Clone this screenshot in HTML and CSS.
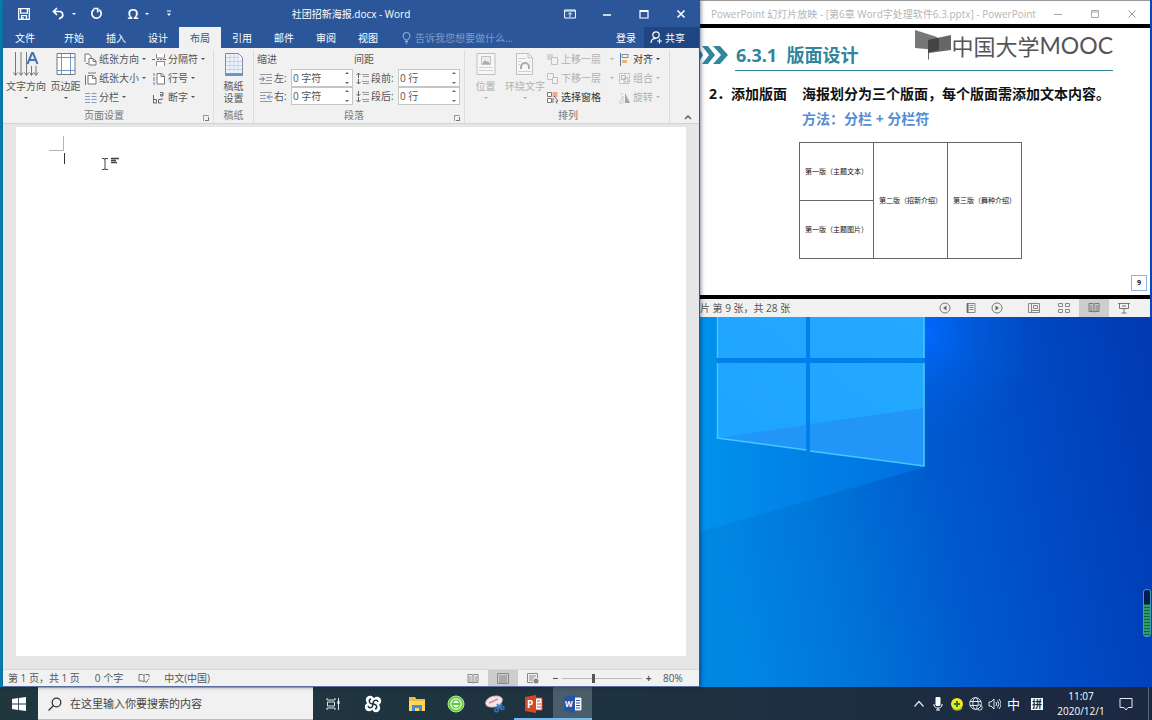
FILE: index.html
```html
<!DOCTYPE html>
<html lang="zh-CN">
<head>
<meta charset="utf-8">
<title>社团招新海报.docx - Word</title>
<link rel="stylesheet" href="styles.css">
</head>
<body>
<main class="desktop">
  <section class="word" aria-label="Word">
    <header class="word-title">
      <div class="qat">
        <button class="q-save" aria-label="保存"><svg width="12" height="12" viewBox="0 0 12 12"><path d="M.7.7h10.6v10.6H.7zM2.700 1v4.200h6.600V1M3.500 11V7.700h5V11M5 9v2" fill="none" stroke="#fff" stroke-width="1.300"/></svg></button>
        <button class="q-undo" aria-label="撤消"><svg width="13" height="13" viewBox="0 0 13 13"><path d="M1.500 4.500h6.300a3.300 3.300 0 0 1 1 6.300L7 12M5 1 1.500 4.500 5 8" fill="none" stroke="#fff" stroke-width="1.700"/></svg></button>
        <button class="q-drop" aria-label="撤消选项"><i class="caret"></i></button>
        <button class="q-redo" aria-label="重复"><svg width="13" height="13" viewBox="0 0 13 13"><path d="M4 2.500a4.700 4.700 0 1 0 5.300.200M3.500 1.500h4.200v4" fill="none" stroke="#fff" stroke-width="1.700"/></svg></button>
        <button class="q-omega" aria-label="符号">Ω</button>
        <button class="q-drop" aria-label="符号选项"><i class="caret"></i></button>
        <button class="q-more" aria-label="自定义"><svg width="6" height="7" viewBox="0 0 6 7"><path d="M1 1h4" stroke="#fff"/><path d="M1 3.500h4L3 6z" fill="#fff"/></svg></button>
      </div>
      <h1>社团招新海报.docx - Word</h1>
      <div class="win-buttons">
        <button aria-label="功能区显示选项"><svg width="12" height="10" viewBox="0 0 12 10"><path d="M.6 1h10.800v8H.6zM.6 2h10.800M6 8V4M4 5.500l2-2 2 2" fill="none" stroke="#fff"/></svg></button>
        <button aria-label="最小化"><svg width="10" height="10" viewBox="0 0 10 10"><path d="M1 6h8" stroke="#fff" stroke-width="1.500"/></svg></button>
        <button aria-label="最大化"><svg width="10" height="10" viewBox="0 0 10 10"><path d="M1 1.500h8V9H1zM1 2.500h8" fill="none" stroke="#fff" stroke-width="1.200"/></svg></button>
        <button aria-label="关闭"><svg width="10" height="10" viewBox="0 0 10 10"><path d="m1.500 1.500 7 7m0-7-7 7" stroke="#fff" stroke-width="1.600"/></svg></button>
      </div>
    </header>
    <nav class="tabs">
      <button class="tab file">文件</button>
      <button class="tab">开始</button>
      <button class="tab">插入</button>
      <button class="tab">设计</button>
      <button class="tab active">布局</button>
      <button class="tab">引用</button>
      <button class="tab">邮件</button>
      <button class="tab">审阅</button>
      <button class="tab">视图</button>
      <label class="tellme"><svg width="9" height="12" viewBox="0 0 9 12"><path d="M3 8C3 6.500 1 6 1 3.900a3.500 3.500 0 0 1 7 0C8 6 6 6.500 6 8zM3 9.500h3M3.500 11h2" fill="none" stroke="#a5b9da"/></svg><input type="text" placeholder="告诉我您想要做什么..." aria-label="告诉我您想要做什么"></label>
      <button class="login">登录</button>
      <button class="share"><svg width="12" height="13" viewBox="0 0 12 13"><circle cx="6" cy="4" r="3.200" fill="none" stroke="#fff" stroke-width="1.200"/><path d="M1 12c0-3 2-4.700 5-4.700M7 10h5M9.500 7.500v5" fill="none" stroke="#fff" stroke-width="1.200"/></svg>共享</button>
    </nav>
    <div class="ribbon">
      <section class="group g-page">
        <div class="tools">
          <button class="big w42"><svg width="26" height="27" viewBox="0 0 26 27"><path d="M2.500 1v23M8 1v23M13.500 1v23M18.500 15v9M23 15v9" stroke="#777"/><path d="m.5 21.500 2 3 2-3M6 21.500l2 3 2-3M11.500 21.500l2 3 2-3M16.500 21.500l2 3 2-3M21 21.500l2 3 2-3" fill="none" stroke="#777"/><path d="m14.500 13 4.500-11h1l4.500 11M16 9h7" fill="none" stroke="#4472b8" stroke-width="2"/></svg><span>文字方向</span><i class="caret"></i></button>
          <button class="big w36"><svg width="20" height="27" viewBox="0 0 20 27"><path d="M1 2.500h18v21H1z" fill="#fff" stroke="#777"/><path d="M5.500 3v20M14.500 3v20M1 6.500h18M1 19.500h18" stroke="#6d95cd"/></svg><span>页边距</span><i class="caret"></i></button>
          <div class="stack c68">
            <button class="small"><svg width="13" height="13" viewBox="0 0 13 13"><path d="M1 9V1h4l2 2v2M5 5.500h4.500L12 8v4H5zM9 6v2.500h3" fill="#fff" stroke="#777"/><path d="M2 10.500h2" stroke="#4f7dbe"/></svg>纸张方向<i class="caret"></i></button>
            <button class="small"><svg width="13" height="13" viewBox="0 0 13 13"><path d="M4 3.500h5L12 6v6H4zM8.500 4v2.500H12" fill="#fff" stroke="#777"/><path d="M1.500 3v10M4 1h8" stroke="#777"/></svg>纸张大小<i class="caret"></i></button>
            <button class="small"><svg width="13" height="13" viewBox="0 0 13 13"><path d="M1 2.500h5M1 5.500h5M1 8.500h5M1 11.500h5M7.500 2.500h5M7.500 5.500h5M7.500 8.500h5M7.500 11.500h5" stroke="#7f9cc4"/></svg>分栏<i class="caret"></i></button>
          </div>
          <div class="stack">
            <button class="small"><svg width="14" height="13" viewBox="0 0 14 13"><path d="M4.500 1v4h8V1M4.500 13V8.500h8V13" fill="#fff" stroke="#888"/><path d="M0 6.500h3M5 6.500h2M8 6.500h2M11 6.500h3" stroke="#666"/></svg>分隔符<i class="caret"></i></button>
            <button class="small"><svg width="14" height="13" viewBox="0 0 14 13"><path d="M5 1.500h4.500L12.500 4v8H5zM9 2v2.500h3" fill="#fff" stroke="#777"/><path d="M2 1v3M1 6h2M1 8h2M2 10v3" stroke="#4f7dbe"/></svg>行号<i class="caret"></i></button>
            <button class="small"><svg width="14" height="13" viewBox="0 0 14 13"><path d="M1.500 4v8h3V8.500h-3M9.500 8.500H6.500V12h3M8 1.500h3V5H8.500V3.500H11M10 7v2" fill="none" stroke="#666"/></svg>断字<i class="caret"></i></button>
          </div>
        </div>
        <footer><span>页面设置</span><button class="launch" aria-label="页面设置对话框"></button></footer>
      </section>
      <section class="group g-grid">
        <div class="tools">
          <button class="big w40"><svg width="20" height="27" viewBox="0 0 20 27"><path d="M1.500 2.500h13l4 4v18h-17z" fill="#eef3fa" stroke="#7c8da8"/><path d="M2 6.500h13M2 10.500h16M2 14.500h16M2 18.500h16M6 3v17M10 3v17M14 3v17" stroke="#c3d3eb"/><path d="M2 22h16v2H2z" fill="#7296cb"/></svg><span>稿纸</span><span>设置</span></button>
        </div>
        <footer><span>稿纸</span></footer>
      </section>
      <section class="group g-para">
        <div class="tools para">
          <div class="fields">
            <h2>缩进</h2>
            <div class="field"><svg width="14" height="13" viewBox="0 0 14 13"><path d="M1 2.500h12M7 5.500h6M7 8.500h6M1 11.500h12" stroke="#999"/><path d="M0 7h5M3 4.500 5.500 7 3 9.500" fill="none" stroke="#4f6f9e"/></svg><label for="left">左:</label><span class="spin"><input id="left" type="text" value="0 字符"><i class="updown"></i></span></div>
            <div class="field"><svg width="14" height="13" viewBox="0 0 14 13"><path d="M1 2.500h12M1 5.500h6M1 8.500h6M1 11.500h12" stroke="#999"/><path d="M8 7h6M11 4.500 8.500 7 11 9.500" fill="none" stroke="#4f7dbe"/></svg><label for="right">右:</label><span class="spin"><input id="right" type="text" value="0 字符"><i class="updown"></i></span></div>
          </div>
          <div class="fields wide">
            <h2>间距</h2>
            <div class="field"><svg width="14" height="13" viewBox="0 0 14 13"><path d="M6 2.500h7M7 4.500h6M6 9.500h7M7 11.500h6" stroke="#999"/><path d="M2.500 6V1M.5 3l2-2 2 2M2.500 7v5M.5 10l2 2 2-2" fill="none" stroke="#666"/></svg><label for="before">段前:</label><span class="spin"><input id="before" type="text" value="0 行"><i class="updown"></i></span></div>
            <div class="field"><svg width="14" height="13" viewBox="0 0 14 13"><path d="M6 2.500h7M7 4.500h6M6 9.500h7M7 11.500h6" stroke="#999"/><path d="M2.500 1v5M.5 4l2 2 2-2M2.500 7v5M.5 10l2 2 2-2" fill="none" stroke="#666"/></svg><label for="after">段后:</label><span class="spin"><input id="after" type="text" value="0 行"><i class="updown"></i></span></div>
          </div>
        </div>
        <footer><span>段落</span><button class="launch" aria-label="段落对话框"></button></footer>
      </section>
      <section class="group g-arrange">
        <div class="tools">
          <button class="big w36" disabled><svg width="20" height="27" viewBox="0 0 20 27"><path d="M1 2.500h18v21H1z" fill="#f7f7f7" stroke="#c0c0c0"/><path d="M3 16.500h14M3 19.500h14" stroke="#d0d0d0"/><path d="M5.500 5.500h9v8h-9z" fill="#eee" stroke="#c0c0c0"/><path d="m6 13 3-4 2 2 1-1 2 3z" fill="#aaa"/></svg><span>位置</span><i class="caret"></i></button>
          <button class="big w42" disabled><svg width="20" height="27" viewBox="0 0 20 27"><path d="M1.500 2.500h12l4 4v17h-16zM13 3v4h4" fill="#f7f7f7" stroke="#c0c0c0"/><path d="M3 7.500h8M3 10.500h3M14 10.500h2M3 13.500h2M3 20.500h13" stroke="#d0d0d0"/><path d="M6 18v-2a4 4 0 0 1 8 0v2" fill="none" stroke="#aaa" stroke-width="2"/></svg><span>环绕文字</span><i class="caret"></i></button>
          <div class="stack c72">
            <button class="small" disabled><svg width="13" height="13" viewBox="0 0 13 13"><path d="M1 1h6v6H1z" fill="#d5d5d5"/><path d="M5.500 4.500h6v7h-6z" fill="#f3f3f3" stroke="#c0c0c0"/></svg>上移一层<i class="caret end"></i></button>
            <button class="small" disabled><svg width="13" height="13" viewBox="0 0 13 13"><path d="M1.500 1.500h6v6h-6z" fill="#f3f3f3" stroke="#c0c0c0"/><path d="M6.500 5.500h5v6h-5z" fill="#f3f3f3" stroke="#c0c0c0"/></svg>下移一层<i class="caret end"></i></button>
            <button class="small dark"><svg width="13" height="13" viewBox="0 0 13 13"><path d="M1.500 1.500h4v4h-4zM1.500 7.500h4v4h-4z" fill="#fff" stroke="#777"/><path d="M6.500 1h5v5h-5z" fill="#f1a98a"/><path d="m8 5 4 5-2 .300 1 2.200M7 7v5" fill="none" stroke="#666"/></svg>选择窗格</button>
          </div>
          <div class="stack">
            <button class="small dark"><svg width="13" height="13" viewBox="0 0 13 13"><path d="M2.500 0v13" stroke="#4f7dbe"/><path d="M4 1.500h6v3H4z" fill="#f3f3f3" stroke="#888"/><path d="M4 7h5v3H4z" fill="#edb36b"/></svg>对齐<i class="caret"></i></button>
            <button class="small" disabled><svg width="13" height="13" viewBox="0 0 13 13"><path d="M1.500 1.500h10v10h-10z" fill="none" stroke="#b8b8b8" stroke-dasharray="3 1"/><path d="M3.500 3.500h4v4h-4zM6 6h4v4H6z" fill="none" stroke="#b8b8b8"/></svg>组合<i class="caret"></i></button>
            <button class="small" disabled><svg width="13" height="13" viewBox="0 0 13 13"><path d="M7 2v10h5z" fill="#a5a5a5"/><path d="M5 5v7H1zM2 3h3" fill="#eee" stroke="#d0d0d0"/></svg>旋转<i class="caret"></i></button>
          </div>
        </div>
        <footer><span>排列</span></footer>
      </section>
      <button class="collapse" aria-label="折叠功能区"><svg width="8" height="6" viewBox="0 0 8 6"><path d="m1 5 3-3 3 3" fill="none" stroke="#555" stroke-width="1.300"/></svg></button>
    </div>
    <div class="canvas">
      <article class="page">
        <svg width="80" height="40" viewBox="0 0 80 40"><path d="M0 14.500h14.500V0" fill="none" stroke="#b5b5b5"/><path d="M15.500 17v11" stroke="#333"/><path d="M53 22.500h2l1 .5 1-.5h2M53 33.500h2l1-.5 1 .5h2M56 23v10" fill="none" stroke="#444"/><path d="M62 22.500h8M62 24.500h5M62 26.500h6" stroke="#444" stroke-width="1.300"/></svg>
      </article>
    </div>
    <footer class="word-status">
      <span class="s-pages">第 1 页，共 1 页</span><span class="s-words">0 个字</span>
      <svg class="s-proof" width="12" height="11" viewBox="0 0 12 11"><path d="M6 9 4.500 8H1V1.500h3.500L6 2.500 7.500 1.500H11V4M6 2.500V9M6.500 7.500l1.500 2 3-4" fill="none" stroke="#777"/></svg>
      <span>中文(中国)</span>
      <div class="views">
        <button aria-label="阅读视图"><svg width="12" height="11" viewBox="0 0 12 11"><path d="M1 1.500h4l1 .8 1-.8h4v8H7L6 10l-1-.5H1zM6 2v8M2 4h2.500M2 6h2.500M2 8h2.500M7.500 4H10M7.500 6H10M7.500 8H10" fill="none" stroke="#888"/></svg></button>
        <button class="on" aria-label="页面视图"><svg width="12" height="11" viewBox="0 0 12 11"><path d="M.5.500h11v10H.5zM2 3h8M2 5h8M2 7h8M2 9h8" fill="none" stroke="#888"/></svg></button>
        <button aria-label="Web 版式视图"><svg width="12" height="11" viewBox="0 0 12 11"><path d="M6 9.500H.5v-9h10V5M2 3h7M2 5h5M2 7h4" fill="none" stroke="#888"/><circle cx="9" cy="8" r="2.500" fill="#888"/></svg></button>
      </div>
      <div class="zoom"><button aria-label="缩小">−</button><input type="range" min="0" max="100" value="39" aria-label="缩放"><button aria-label="放大">+</button><span>80%</span></div>
    </footer>
  </section>

  <section class="right">
    <section class="ppt" aria-label="PowerPoint">
      <header class="ppt-title"><h2>PowerPoint 幻灯片放映 - [第6章 Word字处理软件6.3.pptx] - PowerPoint</h2>
        <div class="win-buttons">
          <button aria-label="最小化"><svg width="10" height="10" viewBox="0 0 10 10"><path d="M1 5.500h8" stroke="#aaa"/></svg></button>
          <button aria-label="还原"><svg width="10" height="10" viewBox="0 0 10 10"><path d="M1.500 1.500h7v7h-7zM1.500 3h7" fill="none" stroke="#aaa"/></svg></button>
          <button aria-label="关闭"><svg width="10" height="10" viewBox="0 0 10 10"><path d="m1.500 1.500 7 7m0-7-7 7" stroke="#999"/></svg></button>
        </div>
      </header>
      <article class="slide">
        <header class="slide-head">
          <svg class="arrows" width="28" height="18" viewBox="0 0 28 18"><path d="M0 4v10l3-5zM2 0h6l7 9-7 9H2l7-9zM13 0h7l8 9-8 9h-7l8-9z" fill="#31859c"/></svg>
          <div class="head-line">
            <h3>6.3.1&nbsp; 版面设计</h3>
            <div class="logo"><svg width="36" height="30" viewBox="0 0 36 30"><path d="m0 0 22 7v13L0 18z" fill="#777"/><path d="M13 10 36 5v15l-22 3v7l-1-1z" fill="#666"/><path d="m13 10 11-2.300V20l-11 2.500z" fill="#444"/></svg><span class="logo-cn">中国大学</span><span class="logo-en">MOOC</span></div>
          </div>
        </header>
        <div class="points">
          <p>2．添加版面</p>
          <div><p>海报划分为三个版面，每个版面需添加文本内容。</p><p class="how">方法：分栏 + 分栏符</p></div>
        </div>
        <table class="plan">
          <tr><td>第一版（主题文本）</td><td rowspan="2">第二版（招新介绍）</td><td rowspan="2">第三版（舞种介绍）</td></tr>
          <tr><td>第一版（主题图片）</td></tr>
        </table>
        <footer class="slide-foot"><span>9</span></footer>
      </article>
      <footer class="ppt-status">
        <span>片 第 9 张，共 28 张</span>
        <div class="nav">
          <button aria-label="上一张"><svg width="12" height="12" viewBox="0 0 12 12"><circle cx="6" cy="6" r="5" fill="none" stroke="#777"/><path d="M7.500 3.500v5L4 6z" fill="#666"/></svg></button>
          <button aria-label="菜单"><svg width="12" height="12" viewBox="0 0 12 12"><path d="M2 1.500h8v9H2zM4.500 3.500h4M4.500 5.500h4M4.500 7.500h4" fill="none" stroke="#888"/><path d="M2 1h1.500v10H2z" fill="#666"/></svg></button>
          <button aria-label="下一张"><svg width="12" height="12" viewBox="0 0 12 12"><circle cx="6" cy="6" r="5" fill="none" stroke="#777"/><path d="M4.500 3.500v5L8 6z" fill="#666"/></svg></button>
        </div>
        <div class="modes">
          <button aria-label="普通"><svg width="12" height="12" viewBox="0 0 12 12"><path d="M.5 1.500h11v9H.5zM3.500 1.500v9M5.500 3.500h4v3h-4zM3.500 8.500h8" fill="none" stroke="#888"/></svg></button>
          <button aria-label="幻灯片浏览"><svg width="12" height="12" viewBox="0 0 12 12"><path d="M.5 1.500h4v3h-4zM7.500 1.500h4v3h-4zM.5 7.500h4v3h-4zM7.500 7.500h4v3h-4z" fill="none" stroke="#888"/></svg></button>
          <button class="on" aria-label="阅读视图"><svg width="12" height="12" viewBox="0 0 12 12"><path d="M1 1.500h4l1 .8 1-.8h4v8H7L6 10l-1-.5H1zM6 2v8M2 4h2.500M2 6h2.500M2 8h2.500M7.500 4H10M7.500 6H10M7.500 8H10" fill="none" stroke="#777"/></svg></button>
          <button aria-label="幻灯片放映"><svg width="12" height="12" viewBox="0 0 12 12"><path d="M0 1.500h12M1.500 2v4.500h9V2M4 4h4M6 7v4M3.500 11h5" fill="none" stroke="#777"/></svg></button>
        </div>
      </footer>
    </section>
    <div class="wallpaper">
      <svg viewBox="700 317 452 370" preserveAspectRatio="xMinYMin slice" aria-hidden="true">
        <defs>
          <linearGradient id="base" x1="0" y1=".35" x2="1" y2=".2"><stop offset="0" stop-color="#0087e4"/><stop offset=".25" stop-color="#0074d8"/><stop offset=".5" stop-color="#005acd"/><stop offset=".75" stop-color="#0049c2"/><stop offset="1" stop-color="#003bb3"/></linearGradient>
          <radialGradient id="glow" gradientUnits="userSpaceOnUse" cx="925" cy="335" r="110"><stop offset="0" stop-color="#0069ff"/><stop offset=".5" stop-color="#0062ee" stop-opacity=".4"/><stop offset="1" stop-color="#0060e8" stop-opacity="0"/></radialGradient>
          <linearGradient id="beam" x1="0" y1=".6" x2="1" y2=".6"><stop offset="0" stop-color="#0092ec"/><stop offset="1" stop-color="#006edf"/></linearGradient>
          <linearGradient id="pane" x1="0" y1="1" x2="1" y2="0"><stop offset="0" stop-color="#1ca4ff"/><stop offset="1" stop-color="#25a9ff"/></linearGradient>
        </defs>
        <path d="M700 317h452v370H700z" fill="url(#base)"/>
        <path d="M810 317h230v140H810z" fill="url(#glow)"/>
        <path d="M700 317h225v150L700 532z" fill="url(#beam)"/>
        <path d="M717 317h208v150L717 438z" fill="#0080ea"/>
        <path d="M717 317h89v41h-89zM810 317h114v41H810zM717 363h89v87l-89-12zM810 363h114v103l-114-15z" fill="url(#pane)"/>
        <path d="m717 438 89-13v25zM810 424l114-16v58l-114-15z" fill="#2196f8"/>
        <path d="M717.500 317v41M717.500 363v75l89 12M810 451l114 15V363M924 358v-41" fill="none" stroke="#45c8ff" stroke-width="1.500"/>
      </svg>
    </div>
  </section>
  <div class="meter" aria-hidden="true"></div>
</main>

<footer class="taskbar">
  <button class="start" aria-label="开始"><svg width="14" height="14" viewBox="0 0 14 14"><path d="m0 2 6-.9v5.500H0zM6.800 1 14 0v6.600H6.800zM0 7.400h6v5.500L0 12zM6.800 7.400H14V14l-7.200-1z" fill="#fff"/></svg></button>
  <label class="search"><svg width="14" height="14" viewBox="0 0 14 14"><circle cx="8.500" cy="5.500" r="4.300" fill="none" stroke="#333" stroke-width="1.300"/><path d="m5.500 8.500-5 5" stroke="#333" stroke-width="1.300"/></svg><input type="text" placeholder="在这里输入你要搜索的内容" aria-label="搜索"></label>
  <nav class="apps">
    <button aria-label="任务视图"><svg width="14" height="14" viewBox="0 0 14 14"><path d="M1 1v2h8V1M1 13v-2h8v2M1.500 5h7v4h-7zM12.500 1v12" fill="none" stroke="#dde3e8"/><path d="M11.500 4h2v3h-2z" fill="#fff"/></svg></button>
    <button class="gap-after" aria-label="应用"><svg width="18" height="18" viewBox="0 0 18 18"><g fill="#fff"><circle cx="6" cy="5" r="4.200"/><circle cx="13" cy="6" r="4.200"/><circle cx="12" cy="13" r="4.200"/><circle cx="5" cy="12" r="4.200"/></g><path d="M9 9C5 9 4 5 7 4M9 9c0-4 4-5 5-2M9 9c4 0 5 4 2 5M9 9c0 4-4 5-5 2" fill="none" stroke="#21373f" stroke-width="1.400"/></svg></button>
    <button aria-label="文件资源管理器"><svg width="18" height="16" viewBox="0 0 18 16"><path d="M1 1h6l1.500 2H17v12H1z" fill="#f3b93a"/><path d="M1 5h16v10H1z" fill="#ffd75e"/><path d="M4 9h10v6h-3v-3H7v3H4z" fill="#3f8fd2"/></svg></button>
    <button aria-label="浏览器"><svg width="18" height="18" viewBox="0 0 18 18"><circle cx="9" cy="9" r="8" fill="#5cc638" stroke="#b6eba0"/><circle cx="9" cy="9" r="5.200" fill="none" stroke="#d7f5cb" stroke-width="1.500"/><path d="M5.500 8h7L9 5zM5.500 10h7L9 13z" fill="#f2ffed"/></svg></button>
    <button aria-label="截图工具"><svg width="20" height="18" viewBox="0 0 20 18"><ellipse cx="9" cy="6.500" rx="8.500" ry="5.200" transform="rotate(-18 9 6.500)" fill="#f4e7ea" stroke="#e3b8be"/><path d="m4 8 9-4" stroke="#d88a94" stroke-width="1.500"/><path d="m12 9 5 6M17 9l-5 5" stroke="#3884c4" stroke-width="1.800"/><circle cx="11.500" cy="15" r="1.800" fill="none" stroke="#2b73b5" stroke-width="1.500"/><circle cx="17.500" cy="13" r="1.500" fill="none" stroke="#2b73b5" stroke-width="1.500"/></svg></button>
    <button class="running" aria-label="PowerPoint"><svg width="18" height="18" viewBox="0 0 18 18"><path d="M9 3h8v12H9z" fill="#fff" stroke="#d24726"/><path d="M12 6h3M12 9h4M12 12h4" stroke="#d24726"/><path d="M0 2 11 0v18L0 16z" fill="#d24726"/><text x="2" y="13" class="mark">P</text></svg></button>
    <button class="running current" aria-label="Word"><svg width="18" height="18" viewBox="0 0 18 18"><path d="M9 3h8v12H9z" fill="#fff" stroke="#dce6f5"/><path d="M12 5.500h4M12 8h4M12 10.500h4M12 13h4" stroke="#2b579a"/><path d="M0 2 11 0v18L0 16z" fill="#2456a5"/><text x="1" y="12" class="mark w">W</text></svg></button>
  </nav>
  <div class="tray">
    <button aria-label="显示隐藏的图标"><svg width="12" height="8" viewBox="0 0 12 8"><path d="m1.500 6.500 4.500-5 4.500 5" fill="none" stroke="#e5e8ee" stroke-width="1.200"/></svg></button>
    <button aria-label="麦克风"><svg width="10" height="14" viewBox="0 0 10 14"><rect x="2.500" width="5" height="9" rx="1" fill="#fff"/><path d="M1 7v1c0 4 8 4 8 0V7M5 11v2M3 13h4" fill="none" stroke="#fff"/></svg></button>
    <button aria-label="安全卫士"><svg width="14" height="14" viewBox="0 0 14 14"><circle cx="7" cy="7" r="6" fill="#efe81e"/><path d="M3 11.500a6 6 0 0 0 9-1" stroke="#8fc52d" stroke-width="1.500" fill="none"/><path d="M7 4v6M4 7h6" stroke="#27762a" stroke-width="2"/></svg></button>
    <button aria-label="网络"><svg width="14" height="14" viewBox="0 0 14 14"><g fill="none" stroke="#dfe3e9"><circle cx="6.500" cy="6.500" r="5.800"/><ellipse cx="6.500" cy="6.500" rx="2.700" ry="5.800"/><path d="M1 4.500h11M1 8.500h11"/><circle cx="10.500" cy="10.500" r="2.700" fill="#1c2a40"/><path d="m9 12 3-3"/></g></svg></button>
    <button aria-label="音量"><svg width="13" height="12" viewBox="0 0 13 12"><path d="M1 4h2l3-3v10L3 8H1zM8 4q1.500 2 0 4M9.500 2.500q3 3.500 0 7M11 1q4 5 0 10" fill="none" stroke="#dfe3e9"/></svg></button>
    <button class="ime">中</button>
    <button class="pinyin" aria-label="拼音"><span>拼</span></button>
    <button class="clock"><time>11:07</time><time>2020/12/1</time></button>
    <button class="notes" aria-label="通知"><svg width="14" height="14" viewBox="0 0 14 14"><path d="M1 1.500h12v9H9L7 13l-2-2.500H1z" fill="none" stroke="#e5e8ee"/></svg></button>
  </div>
</footer>
</body>
</html>
```

FILE: styles.css
```css
* { box-sizing: border-box; }
html, body { height: 100%; }
body {
  margin: 0;
  display: flex;
  flex-direction: column;
  overflow: hidden;
  font: 10px/14px "Open Sans", "Noto Sans CJK SC", sans-serif;
  color: #555;
}
h1, h2, h3, p { margin: 0; font-size: inherit; font-weight: inherit; }
button, input { font: inherit; color: inherit; border: 0; padding: 0; margin: 0; background: none; }
button { display: flex; align-items: center; justify-content: center; white-space: nowrap; }
svg { display: block; flex: none; }

.desktop {
  position: relative;
  flex: 1;
  min-height: 0;
  display: grid;
  grid-template-columns: 697fr 452fr;
  padding-left: 3px;
  background: linear-gradient(90deg, #0a7fb0 0 3px, #0a46b4 3px);
}
.caret {
  flex: none;
  width: 0;
  height: 0;
  border: 2px solid transparent;
  border-top-color: currentColor;
  border-bottom: 0;
}

/* Word window */
.word {
  display: flex;
  flex-direction: column;
  min-width: 0;
  background: #f1f1f1;
  border-right: 1px solid #2b579a;
  border-bottom: 1px solid #5a6e9c;
  box-shadow: 1px 0 4px rgba(0, 20, 60, .5);
  z-index: 1;
}
.word-title {
  display: grid;
  grid-template-columns: 1fr auto 1fr;
  align-items: center;
  height: 27px;
  background: #2b579a;
  color: #fff;
}
.qat, .win-buttons { display: flex; height: 26px; }
.win-buttons { justify-content: flex-end; }
.win-buttons button { width: 37px; }
.q-save { width: 42px; }
.q-undo { width: 26px; }
.q-drop { width: 6px; }
.q-redo { width: 38px; }
.q-omega { width: 22px; margin-left: 7px; font-size: 14px; font-weight: 600; }
.q-more { width: 38px; }

.tabs { display: flex; height: 21px; background: #2b579a; color: #fff; }
.tab { width: 42px; }
.tab.file { width: 50px; padding-right: 6px; }
.tab.active { background: #f1f1f1; color: #2b579a; }
.tellme { flex: 1; min-width: 0; display: flex; align-items: center; gap: 4px; padding-left: 13px; }
.tellme input { width: 110px; }
.tellme input::placeholder { color: #8099c6; opacity: 1; }
.login { width: 36px; }
.share { width: 55px; gap: 3px; padding-right: 8px; background: #1f4583; }

.ribbon {
  display: flex;
  height: 76px;
  padding-top: 2px;
  border-bottom: 1px solid #d2d2d2;
}
.group { display: flex; flex-direction: column; border-right: 1px solid #dcdcdc; }
.g-page { width: 211px; padding-left: 2px; }
.g-grid { width: 40px; }
.g-para { width: 211px; }
.g-arrange { width: 205px; padding-left: 2px; }
.tools { display: flex; height: 57px; }
.group footer { display: flex; height: 16px; align-items: center; color: #777; }
.group footer span { flex: 1; text-align: center; }
.g-page footer, .g-para footer { padding-right: 2px; }
.launch { width: 6px; height: 6px; margin: 5px 2px 0 0; border: 1px solid #999; border-width: 1px 0 0 1px; position: relative; }
.launch::after { content: ""; position: absolute; right: 0; bottom: 0; width: 3px; height: 3px; border: 1px solid #777; border-width: 0 1px 1px 0; }
.big { flex-direction: column; justify-content: flex-start; line-height: 12px; }
.big svg { margin: 1px 0 2px; }
.big .caret { margin-top: 5px; }
.w36 { width: 37px; }
.w40 { width: 39px; }
.w42 { width: 42px; }
.stack { display: flex; flex-direction: column; justify-content: space-between; height: 56px; }
.c68 { width: 68px; }
.c72 { width: 72px; }
.small { height: 18px; gap: 2px; justify-content: flex-start; }
.small .caret { margin-left: 1px; }
.small .end { margin-left: 7px; }
.small.dark { color: #333; }
button:disabled { color: #b0b0b0; }
.para { padding-left: 3px; gap: 1px; }
.fields { width: 96px; }
.fields.wide { width: 106px; }
.fields h2 { height: 19px; line-height: 18px; }
.field { display: flex; align-items: center; height: 18px; padding-left: 2px; gap: 1px; }
.field label { flex: 1; white-space: nowrap; }
.spin { display: flex; align-items: center; width: 62px; height: 18px; border: 1px solid #c6c6c6; background: #fff; }
.spin input { width: 53px; padding-left: 1px; }
.updown { width: 4px; height: 12px; display: flex; flex-direction: column; justify-content: space-between; }
.updown::before, .updown::after { content: ""; border: 2px solid transparent; }
.updown::before { border-bottom-color: #666; border-top: 0; }
.updown::after { border-top-color: #666; border-bottom: 0; }
.collapse { flex: 1; align-items: flex-end; padding: 0 0 3px 6px; }

.canvas { flex: 1; min-height: 0; display: flex; padding: 3px 13px 13px; background: #e6e6e6; }
.page { flex: 1; padding: 9px 33px; background: #fff; }

.word-status { display: flex; align-items: center; height: 17px; padding-left: 5px; border-top: 1px solid #d8d8d8; white-space: nowrap; background: #f1f1f1; }
.s-words { margin-left: 15px; }
.s-proof { margin: 0 14px 0 15px; }
.views { display: flex; margin-left: auto; }
.views button { width: 30px; height: 16px; }
.views .on, .modes .on { background: #cdcdcd; }
.zoom { display: flex; align-items: center; padding-right: 11px; margin-left: 3px; }
.zoom button { width: 9px; font-weight: 700; }
.zoom span { width: 25px; margin-left: 10px; }
.zoom input { appearance: none; width: 80px; height: 14px; margin: 0 2px; background: linear-gradient(#bbb, #bbb) center / 100% 1px no-repeat; }
.zoom input::-webkit-slider-thumb { appearance: none; width: 3px; height: 9px; background: #555; }

/* PowerPoint window */
.right { display: flex; flex-direction: column; min-width: 0; min-height: 0; }
.ppt { margin-right: 2px; background: #000; }
.ppt-title { display: flex; align-items: center; height: 24px; padding-top: 3px; background: #fff; color: #b5b5b5; white-space: nowrap; border-top: 1px solid #999; }
.ppt-title h2 { flex: 1; padding-left: 11px; }
.slide { margin: 4px 0; background: #fff; color: #111; font-size: 14px; line-height: 25px; }
.slide-head { display: flex; height: 43px; }
.arrows { margin-top: 18px; }
.head-line { flex: 1; display: flex; justify-content: space-between; margin: 0 37px 0 7px; border-bottom: 1px solid #31859c; }
.slide h3 { padding: 14px 0 0 1px; font-size: 18px; line-height: 26px; font-weight: 700; color: #31859c; }
.logo { display: flex; align-items: center; height: 34px; color: #555; }
.logo-cn { font: 400 22px/30px "Noto Sans CJK SC", sans-serif; }
.logo-en { font: 400 23px/30px Lato, sans-serif; }
.points { display: flex; padding: 10px 0 0 9px; font-weight: 700; white-space: nowrap; }
.points > p { width: 93px; }
.points .how { color: #558ed5; }
.plan { margin: 11px 0 0 99px; border-collapse: collapse; table-layout: fixed; width: 223px; font-size: 7px; line-height: 9px; white-space: nowrap; }
.plan td { height: 58px; padding: 0; text-align: center; border: 1px solid #666; }
.slide-foot { display: flex; justify-content: flex-end; padding: 16px 3px 4px; }
.slide-foot span { width: 16px; height: 16px; border: 1px solid #8db4d8; font-size: 7px; line-height: 14px; font-weight: 700; text-align: center; }
.ppt-status { display: flex; align-items: center; height: 18px; padding-right: 11px; background: #f1f1f1; white-space: nowrap; }
.nav, .modes { display: flex; }
.nav { margin: 0 9px 0 auto; }
.nav button { width: 26px; height: 18px; }
.modes button { width: 30px; height: 18px; }
.wallpaper { flex: 1; min-height: 0; }
.wallpaper svg { width: 100%; height: 100%; }
.meter {
  position: absolute;
  right: 1px;
  bottom: 50px;
  width: 8px;
  height: 48px;
  border: 1px solid #3f9ab5;
  border-radius: 3px;
  background: linear-gradient(#061c4c 0 14px, transparent 14px), repeating-linear-gradient(#2f9d5c 0 2px, #15634f 2px 3px);
}

/* Taskbar */
.taskbar { display: flex; height: 33px; background: linear-gradient(90deg, #20373f, #1e3340 50%, #1c2842); color: #fff; }
.start { width: 38px; }
.search { flex: 0 1 275px; display: flex; align-items: center; gap: 8px; padding-left: 10px; border: 1px solid #bbb; border-width: 1px 0; background: #f1f1f1; }
.search input { flex: 1; min-width: 0; color: #333; font-size: 11px; }
.search input::placeholder { color: #444; opacity: 1; }
.apps { display: flex; }
.apps button { width: 39px; border-bottom: 2px solid transparent; border-top: 2px solid transparent; }
.apps .gap-after { margin: 0 5px 0 1px; }
.apps .running { border-bottom-color: #76b9ed; }
.apps .current { background: #4a5d6a; border-top-color: #4a5d6a; }
.mark { font: 700 10px "Open Sans", sans-serif; fill: #fff; }
.mark.w { font-size: 8px; }
.tray { display: flex; margin-left: auto; margin-right: 3px; padding-right: 7px; border-right: 1px solid #5d687a; }
.tray button { width: 19px; }
.tray .ime { font-size: 13px; }
.tray .pinyin { width: 28px; }
.pinyin span { width: 12px; height: 12px; background: #fff; color: #1c2842; line-height: 12px; font-weight: 700; }
.tray .clock { flex-direction: column; width: 60px; line-height: 15px; }
.tray .notes { width: 30px; }
```
